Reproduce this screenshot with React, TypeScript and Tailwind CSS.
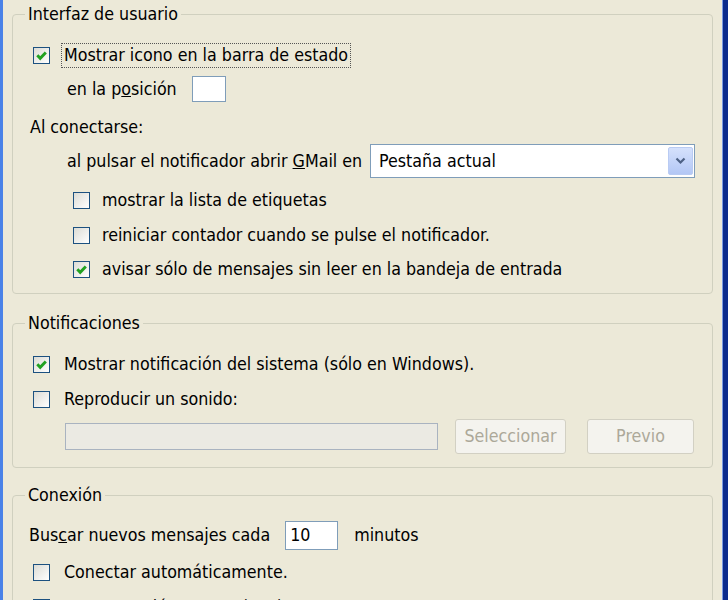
import type { ReactNode } from "react";

const font = "font-['DejaVu_Sans_Condensed','DejaVu_Sans',sans-serif]";

function CheckBox({ checked }: { checked?: boolean }) {
  return (
    <span className="w-[17px] h-[17px] shrink-0 border border-[#1c5180] bg-gradient-to-br from-[#dcdcd5] to-white flex items-center justify-center">
      {checked && (
        <svg width="13" height="13" viewBox="0 0 13 13">
          <path d="M2.3 6.3 L5.2 9.3 L10.8 3.4" fill="none" stroke="#21a121" strokeWidth="2.9" />
        </svg>
      )}
    </span>
  );
}

function Group({ title, className, children }: { title: string; className: string; children: ReactNode }) {
  return (
    <fieldset className={`border border-[#d0d0bf] rounded-[4px] pl-[12px] ${className}`}>
      <legend className="px-[3px] leading-[22px]">{title}</legend>
      {children}
    </fieldset>
  );
}

export default function App() {
  return (
    <div className={`w-[728px] h-[600px] overflow-hidden bg-[#ece9d8] flex text-[17.7px] text-black ${font}`}>
      <div className="w-[3px] bg-[#4a82e8]" />
      <div className="flex-1 flex flex-col px-[9px]">
        {/* Interfaz de usuario */}
        <Group title="Interfaz de usuario" className="mt-[3px] pb-[11px]">
          <div className="flex items-center h-[26px] mt-[17px] ml-[8px]">
            <CheckBox checked />
            <span className="ml-[11px] px-[2px] h-[25px] flex items-center border border-dotted border-[#555]">
              Mostrar icono en la barra de estado
            </span>
          </div>
          <div className="flex items-center h-[26px] mt-[8px] ml-[42px]">
            <span>
              en la p<span className="underline">o</span>sición
            </span>
            <span className="ml-[15px] w-[34px] h-[26px] bg-white border border-[#7f9db9]" />
          </div>
          <div className="flex items-center h-[26px] mt-[12px] ml-[5px]">Al conectarse:</div>
          <div className="flex items-center h-[34px] mt-[4px] ml-[42px] mr-[17px]">
            <span>
              al pulsar el notificador abrir <span className="underline">G</span>Mail en
            </span>
            <div className="ml-auto w-[325px] h-[34px] bg-white border border-[#7f9db9] flex items-center pl-[8px] pr-[1px]">
              <span className="flex-1">Pestaña actual</span>
              <span className="w-[25px] h-[28px] rounded-[2px] border border-[#b9cbf3] bg-gradient-to-b from-[#d5e1fc] to-[#b3c7f5] flex items-center justify-center">
                <svg width="11" height="8" viewBox="0 0 11 8">
                  <path d="M1.5 1.5 L5.5 5.5 L9.5 1.5" fill="none" stroke="#4d6185" strokeWidth="2.2" />
                </svg>
              </span>
            </div>
          </div>
          <div className="flex items-center h-[26px] mt-[9px] ml-[48px]">
            <CheckBox />
            <span className="ml-[12px]">mostrar la lista de etiquetas</span>
          </div>
          <div className="flex items-center h-[26px] mt-[9px] ml-[48px]">
            <CheckBox />
            <span className="ml-[12px]">reiniciar contador cuando se pulse el notificador.</span>
          </div>
          <div className="flex items-center h-[26px] mt-[8px] ml-[48px]">
            <CheckBox checked />
            <span className="ml-[12px]">avisar sólo de mensajes sin leer en la bandeja de entrada</span>
          </div>
        </Group>

        {/* Notificaciones */}
        <Group title="Notificaciones" className="mt-[18px] pb-[13px]">
          <div className="flex items-center h-[26px] mt-[17px] ml-[8px]">
            <CheckBox checked />
            <span className="ml-[14px]">Mostrar notificación del sistema (sólo en Windows).</span>
          </div>
          <div className="flex items-center h-[26px] mt-[9px] ml-[8px]">
            <CheckBox />
            <span className="ml-[14px]">Reproducir un sonido:</span>
          </div>
          <div className="flex items-center h-[35px] mt-[7px] ml-[40px]">
            <span className="w-[373px] h-[27px] bg-[#ebeae3] border border-[#a9b3c0]" />
            <span className="ml-[17px] w-[111px] h-[35px] rounded-[3px] border border-[#d2d0c3] bg-[#f4f3ee] text-[#aca899] flex items-center justify-center">
              Seleccionar
            </span>
            <span className="ml-[21px] w-[107px] h-[35px] rounded-[3px] border border-[#d2d0c3] bg-[#f4f3ee] text-[#aca899] flex items-center justify-center">
              Previo
            </span>
          </div>
        </Group>

        {/* Conexión */}
        <Group title="Conexión" className="mt-[16px] pb-[10px]">
          <div className="flex items-center h-[29px] mt-[15px] ml-[4px]">
            <span>
              Bus<span className="underline">c</span>ar nuevos mensajes cada
            </span>
            <span className="ml-[15px] w-[53px] h-[29px] bg-white border border-[#7f9db9] flex items-center pl-[4px]">10</span>
            <span className="ml-[16px]">minutos</span>
          </div>
          <div className="flex items-center h-[26px] mt-[9px] ml-[8px]">
            <CheckBox />
            <span className="ml-[14px]">Conectar automáticamente.</span>
          </div>
          <div className="flex items-center h-[26px] mt-[9px] ml-[8px]">
            <CheckBox />
            <span className="ml-[14px]">Usar conexión segura (SSL).</span>
          </div>
        </Group>
      </div>
      <div className="w-[6px] bg-[#0c2c8c] border-l border-[#7a9ae0]" />
    </div>
  );
}
